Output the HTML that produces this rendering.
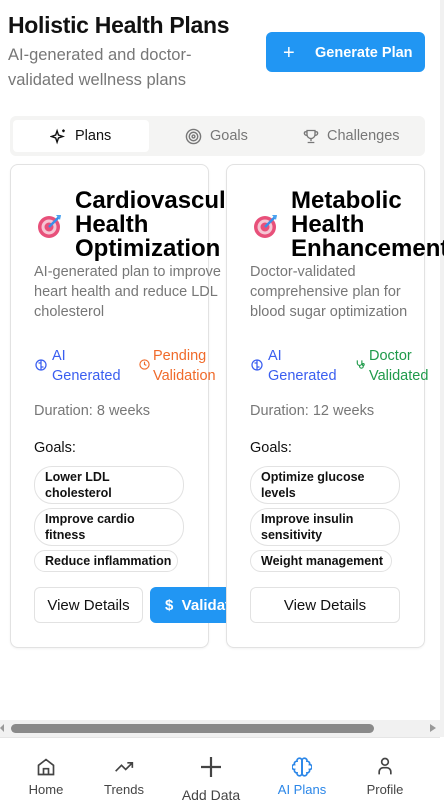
<!DOCTYPE html>
<html><head><meta charset="utf-8"><style>
*{box-sizing:border-box;margin:0;padding:0}
body{width:444px;height:804px;overflow:hidden;background:#fff;font-family:"Liberation Sans",sans-serif;position:relative;color:#111}
.a{position:absolute}
.card{position:absolute;top:164px;width:199px;height:484px;border:1px solid #e2e2e2;border-radius:8px;background:#fff;box-shadow:0 1px 2px rgba(0,0,0,.05)}
.title{position:absolute;left:64px;top:24px;font-size:24px;font-weight:bold;line-height:24px;white-space:nowrap;color:#000}
.desc{position:absolute;left:23px;top:97px;font-size:14.5px;line-height:20px;color:#777;white-space:nowrap}
.badge{position:absolute;font-size:14.5px;line-height:20px}
.dur{position:absolute;left:23px;top:238px;font-size:14.5px;color:#777}
.gl{position:absolute;left:23px;top:275px;font-size:14.5px;color:#111}
.pill{position:absolute;left:23px;border:1px solid #e2e2e2;border-radius:18px;font-size:12.5px;font-weight:bold;line-height:16px;padding:2px 10px;color:#111;white-space:nowrap}
.btn{position:absolute;top:422px;height:36px;border:1px solid #e2e2e2;border-radius:6px;font-size:15px;text-align:center;line-height:36px;background:#fff;white-space:nowrap;overflow:hidden}
.nav{position:absolute;top:782px;font-size:13px;color:#444;text-align:center;width:60px}
</style></head><body>
<div class="a" style="left:440px;top:0;width:4px;height:737px;background:#f1f1f1"></div>
<div class="a" style="left:8px;top:12px;font-size:23px;font-weight:bold;letter-spacing:-0.3px">Holistic Health Plans</div>
<div class="a" style="left:8px;top:43px;font-size:16.5px;line-height:25px;color:#777">AI-generated and doctor-<br>validated wellness plans</div>
<div class="a" style="left:266px;top:32px;width:159px;height:40px;background:#2196f3;border-radius:6px;color:#fff;font-size:14.5px;font-weight:bold;line-height:40px"><span style="position:absolute;left:17px;top:1px;font-size:20px;font-weight:normal">+</span><span style="position:absolute;left:49px;top:1px">Generate Plan</span></div>

<div class="a" style="left:10px;top:116px;width:415px;height:40px;background:#f4f4f3;border-radius:6px"></div>
<div class="a" style="left:13px;top:120px;width:136px;height:32px;background:#fff;border-radius:4px"></div>
<svg class="a" style="left:50px;top:128px" width="17" height="17" viewBox="0 0 24 24" fill="none" stroke="#111" stroke-width="2"><path d="M10 4l2 6 6 2-6 2-2 6-2-6-6-2 6-2z"/><path d="M19 2v4M17 4h4"/></svg>
<div class="a" style="left:75px;top:128px;font-size:14.5px">Plans</div>
<svg class="a" style="left:185px;top:128px" width="17" height="17" viewBox="0 0 24 24" fill="none" stroke="#777" stroke-width="2"><circle cx="12" cy="12" r="10"/><circle cx="12" cy="12" r="6"/><circle cx="12" cy="12" r="2"/></svg>
<div class="a" style="left:210px;top:128px;font-size:14.5px;color:#777">Goals</div>
<svg class="a" style="left:303px;top:128px" width="16" height="17" viewBox="0 0 24 24" fill="none" stroke="#777" stroke-width="2"><path d="M6 3h12v6a6 6 0 0 1-12 0z"/><path d="M6 5H3a3 3 0 0 0 3 5M18 5h3a3 3 0 0 1-3 5M12 15v4M7 21h10"/></svg>
<div class="a" style="left:327px;top:128px;font-size:14.5px;color:#777">Challenges</div>

<div class="card" style="left:10px">
 <svg class="a" style="left:25px;top:47px" width="28" height="28" viewBox="0 0 28 28"><circle cx="13" cy="15" r="11" fill="#e8507a"/><circle cx="13" cy="15" r="7.5" fill="#f6c5d3"/><circle cx="13" cy="15" r="4.5" fill="#e8507a"/><path d="M13 15L24 4" stroke="#3a8ee8" stroke-width="2.5"/><path d="M20 3l5 0-1 5z" fill="#4aa3f0"/></svg>
 <div class="title">Cardiovascular<br>Health<br>Optimization</div>
 <div class="desc">AI-generated plan to improve<br>heart health and reduce LDL<br>cholesterol</div>
 <svg class="a" style="left:24px;top:194px" width="12" height="12" viewBox="0 0 24 24" fill="none" stroke="#3a5ef0" stroke-width="2.5"><circle cx="12" cy="12" r="10"/><path d="M12 2v20M7 8h5M12 16h5"/></svg>
 <div class="badge" style="left:41px;top:181px;color:#3a5ef0">AI<br>Generated</div>
 <svg class="a" style="left:128px;top:194px" width="11" height="11" viewBox="0 0 24 24" fill="none" stroke="#f06a2a" stroke-width="2.5"><circle cx="12" cy="12" r="10"/><path d="M12 6v6l4 2"/></svg>
 <div class="badge" style="left:142px;top:181px;color:#f06a2a">Pending<br>Validation</div>
 <div class="dur">Duration: 8 weeks</div>
 <div class="gl">Goals:</div>
 <div class="pill" style="top:301px;width:150px">Lower LDL<br>cholesterol</div>
 <div class="pill" style="top:343px;width:150px">Improve cardio<br>fitness</div>
 <div class="pill" style="top:385px;width:144px">Reduce inflammation</div>
 <div class="btn" style="left:23px;width:109px">View Details</div>
 <div class="btn" style="left:139px;width:90px;background:#2196f3;border-color:#2196f3;color:#fff;font-weight:bold;text-align:left;padding-left:14px">$&nbsp; Validate</div>
</div>
<div class="card" style="left:226px">
 <svg class="a" style="left:25px;top:47px" width="28" height="28" viewBox="0 0 28 28"><circle cx="13" cy="15" r="11" fill="#e8507a"/><circle cx="13" cy="15" r="7.5" fill="#f6c5d3"/><circle cx="13" cy="15" r="4.5" fill="#e8507a"/><path d="M13 15L24 4" stroke="#3a8ee8" stroke-width="2.5"/><path d="M20 3l5 0-1 5z" fill="#4aa3f0"/></svg>
 <div class="title">Metabolic<br>Health<br>Enhancement</div>
 <div class="desc">Doctor-validated<br>comprehensive plan for<br>blood sugar optimization</div>
 <svg class="a" style="left:24px;top:194px" width="12" height="12" viewBox="0 0 24 24" fill="none" stroke="#3a5ef0" stroke-width="2.5"><circle cx="12" cy="12" r="10"/><path d="M12 2v20M7 8h5M12 16h5"/></svg>
 <div class="badge" style="left:41px;top:181px;color:#3a5ef0">AI<br>Generated</div>
 <svg class="a" style="left:128px;top:194px" width="11" height="11" viewBox="0 0 24 24" fill="none" stroke="#1f9a4a" stroke-width="2.5"><path d="M5 3v6a5 5 0 0 0 10 0V3M10 14v2a4 4 0 0 0 8 0v-2"/><circle cx="18" cy="12" r="2"/></svg>
 <div class="badge" style="left:142px;top:181px;color:#1f9a4a">Doctor<br>Validated</div>
 <div class="dur">Duration: 12 weeks</div>
 <div class="gl">Goals:</div>
 <div class="pill" style="top:301px;width:150px">Optimize glucose<br>levels</div>
 <div class="pill" style="top:343px;width:150px">Improve insulin<br>sensitivity</div>
 <div class="pill" style="top:385px;width:142px">Weight management</div>
 <div class="btn" style="left:23px;width:150px">View Details</div>
</div>

<div class="a" style="left:0;top:720px;width:444px;height:17px;background:#f1f1f1"></div>
<div class="a" style="left:11px;top:724px;width:363px;height:9px;background:#8a8a8a;border-radius:5px"></div>
<div class="a" style="left:0;top:724px;width:0;height:0;border-top:4px solid transparent;border-bottom:4px solid transparent;border-right:4px solid #999"></div>
<div class="a" style="left:430px;top:724px;width:0;height:0;border-top:4px solid transparent;border-bottom:4px solid transparent;border-left:6px solid #999"></div>
<div class="a" style="left:0;top:737px;width:440px;height:1px;background:#e5e5e5"></div>

<svg class="a" style="left:36px;top:757px" width="20" height="20" viewBox="0 0 24 24" fill="none" stroke="#444" stroke-width="2"><path d="M3 10l9-7 9 7v11H3z"/><path d="M9 21v-7h6v7"/></svg>
<div class="nav" style="left:16px">Home</div>
<svg class="a" style="left:113px;top:757px" width="22" height="20" viewBox="0 0 24 24" fill="none" stroke="#444" stroke-width="2"><path d="M2 17l7-7 5 5 8-8M16 7h6v6"/></svg>
<div class="nav" style="left:94px">Trends</div>
<svg class="a" style="left:199px;top:755px" width="24" height="24" viewBox="0 0 24 24" fill="none" stroke="#444" stroke-width="2.2"><path d="M12 2v20M2 12h20"/></svg>
<div class="nav" style="left:181px;top:787px;font-size:14px;width:60px">Add Data</div>
<svg class="a" style="left:292px;top:757px" width="20" height="20" viewBox="0 0 24 24" fill="none" stroke="#2a86e8" stroke-width="2"><path d="M12 4a3 3 0 0 0-6 1 3 3 0 0 0-3 4 3 3 0 0 0 0 6 3 3 0 0 0 3 4 3 3 0 0 0 6 1z"/><path d="M12 4a3 3 0 0 1 6 1 3 3 0 0 1 3 4 3 3 0 0 1 0 6 3 3 0 0 1-3 4 3 3 0 0 1-6 1z"/><path d="M12 4v16"/></svg>
<div class="nav" style="left:272px;color:#2a86e8">AI Plans</div>
<svg class="a" style="left:375px;top:756px" width="20" height="20" viewBox="0 0 24 24" fill="none" stroke="#444" stroke-width="2"><circle cx="12" cy="7" r="4"/><path d="M5 22v-3a5 5 0 0 1 5-5h4a5 5 0 0 1 5 5v3"/></svg>
<div class="nav" style="left:355px">Profile</div>
</body></html>
